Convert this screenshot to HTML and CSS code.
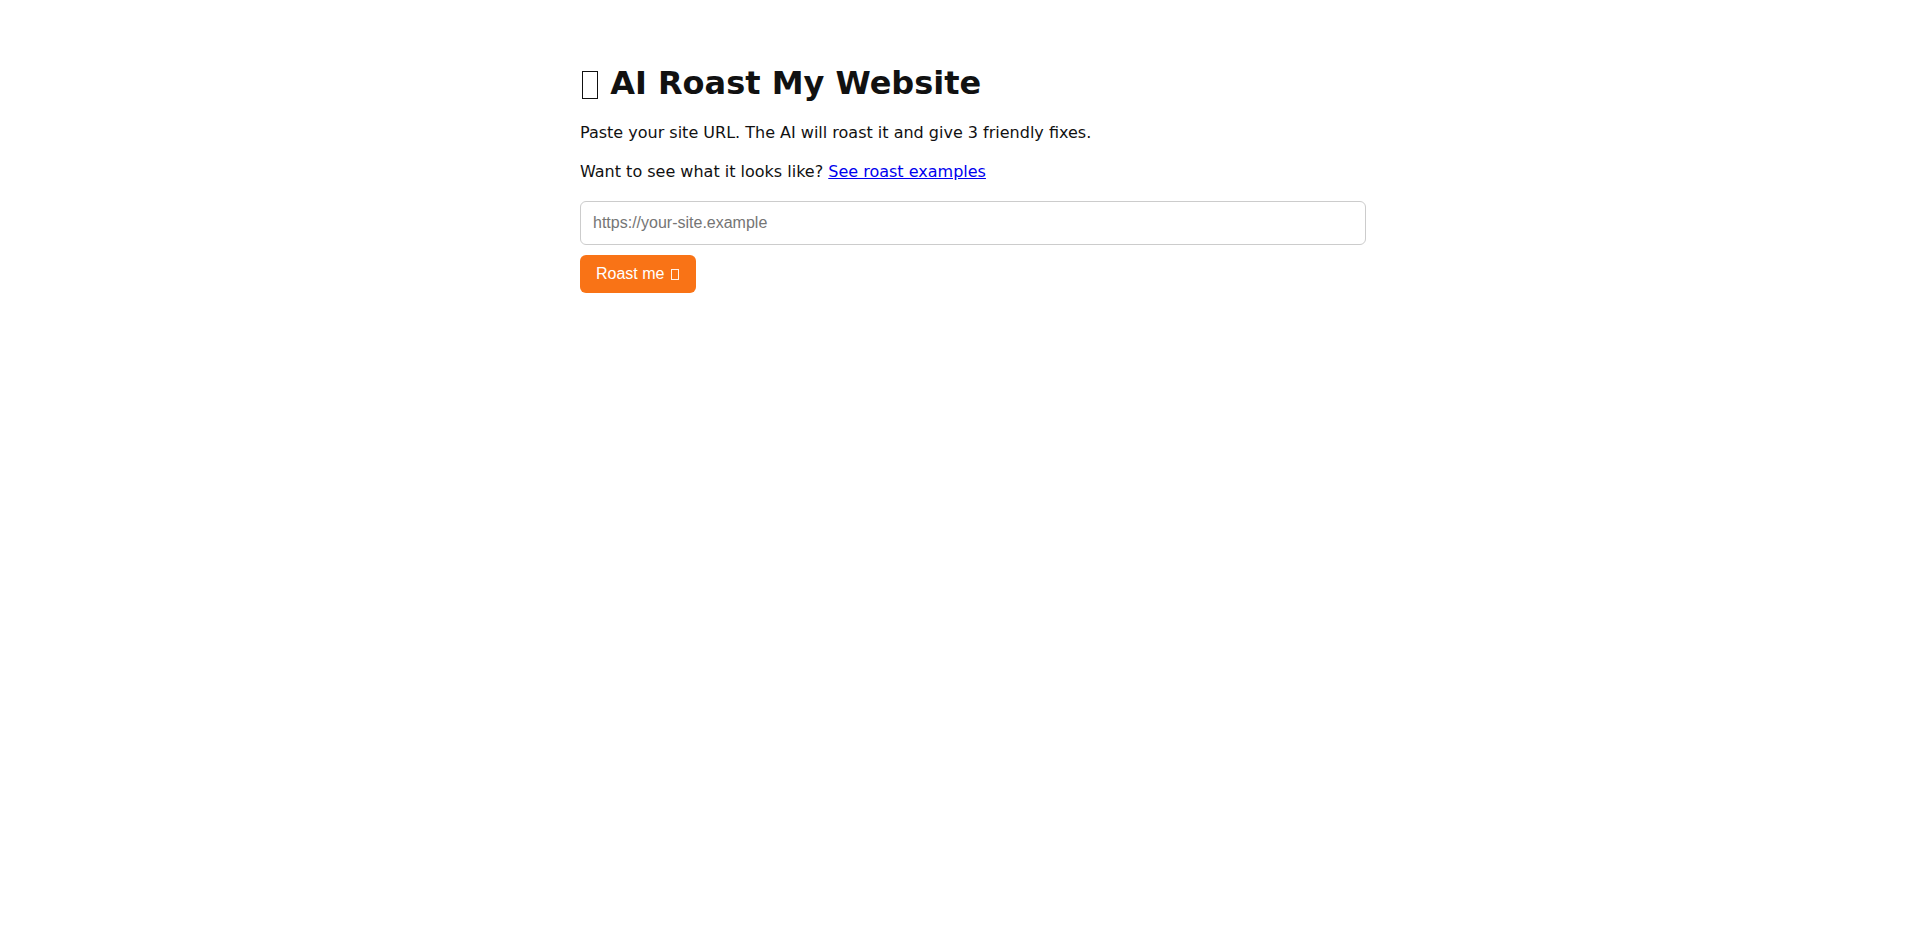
FILE: index.html
```html
<!DOCTYPE html>
<html lang="en">
<head>
<meta charset="utf-8">
<title>AI Roast My Website</title>
<link rel="stylesheet" href="styles.css">
</head>
<body>
<main class="wrap">
  <h1 class="title"><span class="tofu tofu-lg" aria-label="🔥"></span> AI Roast My Website</h1>
  <p class="lead">Paste your site URL. The AI will roast it and give 3 friendly fixes.</p>
  <p class="lead">Want to see what it looks like? <a class="link" href="#examples">See roast examples</a></p>
  <form class="form">
    <input class="url" type="url" placeholder="https://your-site.example">
    <button class="btn" type="button">Roast me <span class="tofu tofu-sm" aria-label="🔥"></span></button>
  </form>
</main>
</body>
</html>
```

FILE: styles.css
```css
html, body {
  margin: 0;
  padding: 0;
  background: #ffffff;
}
body {
  font-family: "DejaVu Sans", system-ui, sans-serif;
  color: #111111;
  line-height: 1.5;
}
.wrap {
  max-width: 760px;
  margin: 64px auto 40px;
}
.title {
  font-size: 32px;
  font-weight: 700;
  margin: 21px 0 19px;
  line-height: 1.2;
}
.tofu {
  display: inline-block;
  box-sizing: border-box;
  border-style: solid;
  border-color: currentColor;
}
.tofu-lg {
  width: 15.5px;
  height: 28.5px;
  border-width: 1.5px;
  margin: 0 1.5px 0 2px;
  vertical-align: -5px;
}
.tofu-sm {
  width: 7.5px;
  height: 10.5px;
  border-width: 1px;
  margin: 0 1px 0 2.5px;
  vertical-align: -0.5px;
  opacity: 0.9;
}
.lead {
  font-size: 16px;
  margin: 15px 0;
}
.link {
  color: #0000ee;
}
.form {
  display: flex;
  flex-direction: column;
  align-items: flex-start;
  gap: 10px;
  margin-top: 17px;
}
.url {
  width: 100%;
  padding: 12px;
  border: 1px solid #cccccc;
  border-radius: 6px;
  font-family: "Liberation Sans", Arial, sans-serif;
  font-size: 16px;
  box-sizing: content-box;
}
.url::placeholder {
  color: #757575;
}
.btn {
  background: #f97316;
  color: #ffffff;
  border: none;
  border-radius: 6px;
  padding: 10px 16px;
  font-family: "Liberation Sans", Arial, sans-serif;
  font-size: 16px;
}
```
